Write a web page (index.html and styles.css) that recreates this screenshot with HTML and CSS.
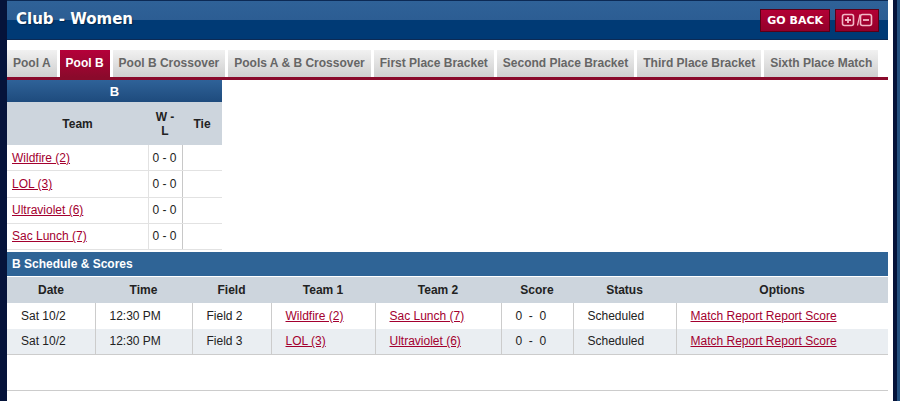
FILE: index.html
```html
<!DOCTYPE html>
<html lang="en">
  <head>
    <meta charset="UTF-8" />
    <meta name="viewport" content="width=device-width, initial-scale=1.0" />
    <title>Club - Women</title>
    <link rel="stylesheet" href="styles.css">
  </head>
  <body>
    <div class="page">
      <div class="header">
        <h1>Club - Women</h1>
        <div class="actions">
          <a class="btn" href="#">GO BACK</a>
          <a class="btn toggle" href="#">
            <svg width="32" height="14" viewBox="0 0 32 14">
              <rect x="1.5" y="1.5" width="11" height="11" rx="2" fill="none" stroke="#f2b8c6" stroke-width="1.6" />
              <path d="M4 7h6M7 4v6" stroke="#f2b8c6" stroke-width="1.8" />
              <path d="M16.5 12.5l2.5-11" stroke="#f2b8c6" stroke-width="1.2" />
              <rect x="19.5" y="1.5" width="11" height="11" rx="2" fill="none" stroke="#f2b8c6" stroke-width="1.6" />
              <path d="M22 7h6" stroke="#f2b8c6" stroke-width="1.8" />
            </svg>
          </a>
        </div>
      </div>

      <ul class="tabs">
        <li><a href="#">Pool A</a></li>
        <li class="active"><a href="#">Pool B</a></li>
        <li><a href="#">Pool B Crossover</a></li>
        <li><a href="#">Pools A &amp; B Crossover</a></li>
        <li><a href="#">First Place Bracket</a></li>
        <li><a href="#">Second Place Bracket</a></li>
        <li><a href="#">Third Place Bracket</a></li>
        <li><a href="#">Sixth Place Match</a></li>
      </ul>

      <table class="pool">
        <tr><th colspan="3" class="caption">B</th></tr>
        <tr class="heads">
          <th class="c-team">Team</th>
          <th class="c-wl">W - L</th>
          <th class="c-tie">Tie</th>
        </tr>
        <tr><td><a href="#">Wildfire (2)</a></td><td>0 - 0</td><td></td></tr>
        <tr><td><a href="#">LOL (3)</a></td><td>0 - 0</td><td></td></tr>
        <tr><td><a href="#">Ultraviolet (6)</a></td><td>0 - 0</td><td></td></tr>
        <tr><td><a href="#">Sac Lunch (7)</a></td><td>0 - 0</td><td></td></tr>
      </table>

      <div class="bar">B Schedule &amp; Scores</div>
      <table class="schedule">
        <tr class="heads">
          <th class="s-date">Date</th>
          <th class="s-time">Time</th>
          <th class="s-field">Field</th>
          <th class="s-t1">Team 1</th>
          <th class="s-t2">Team 2</th>
          <th class="s-score">Score</th>
          <th class="s-status">Status</th>
          <th>Options</th>
        </tr>
        <tr>
          <td>Sat 10/2</td>
          <td>12:30 PM</td>
          <td>Field 2</td>
          <td><a href="#">Wildfire (2)</a></td>
          <td><a href="#">Sac Lunch (7)</a></td>
          <td>0&nbsp; - &nbsp;0</td>
          <td>Scheduled</td>
          <td><a href="#">Match Report Report Score</a></td>
        </tr>
        <tr class="alt">
          <td>Sat 10/2</td>
          <td>12:30 PM</td>
          <td>Field 3</td>
          <td><a href="#">LOL (3)</a></td>
          <td><a href="#">Ultraviolet (6)</a></td>
          <td>0&nbsp; - &nbsp;0</td>
          <td>Scheduled</td>
          <td><a href="#">Match Report Report Score</a></td>
        </tr>
      </table>

      <div class="footer-line"></div>
    </div>
  </body>
</html>
```

FILE: styles.css
```css
body {
  margin: 0;
  padding: 0;
  height: 401px;
  overflow: hidden;
  background: linear-gradient(to right, #05133a 0, #05133a 897px, #24507f 897px);
  font-family: "Liberation Sans", Arial, sans-serif;
  font-size: 12px;
  color: #222;
}
.page {
  margin-left: 7px;
  width: 881px;
  padding-right: 5px;
  height: 401px;
  background-color: white;
}
a {
  color: #a3002f;
}

/* title bar */
.header {
  height: 38px;
  border-top: 1px solid #0c2a55;
  border-bottom: 1px solid #0c2a55;
  background: linear-gradient(#2f6298 0, #2c5d93 19px, #003a75 19px, #003a75 100%);
  display: flex;
  justify-content: space-between;
  align-items: center;
  padding-left: 9px;
  padding-right: 9px;
}
.header h1 {
  margin: 0 0 2px 0;
  color: white;
  font-family: "DejaVu Sans", Verdana, sans-serif;
  font-size: 15px;
  font-weight: bold;
  text-shadow: 1px 1px 1px rgba(0, 0, 0, 0.35);
}
.actions {
  display: flex;
  gap: 5px;
}
.btn {
  height: 21px;
  padding: 0 6px;
  display: flex;
  align-items: center;
  border: 1px solid #5a0016;
  background: linear-gradient(#b30035, #93002a);
  color: white;
  font-family: "DejaVu Sans", Verdana, sans-serif;
  font-size: 11px;
  font-weight: bold;
  text-decoration: none;
}
.toggle {
  padding: 0 5px;
}

/* tabs */
.tabs {
  list-style: none;
  margin: 10px 0 0 0;
  padding: 0;
  display: flex;
  gap: 3px;
  border-bottom: 3px solid #8a0a2b;
}
.tabs li {
  flex: none;
}
.tabs li a {
  display: block;
  height: 27px;
  line-height: 27px;
  padding: 0 6px;
  white-space: nowrap;
  background: linear-gradient(#f1f1f1, #cfcfcf);
  color: #666;
  font-weight: bold;
  text-decoration: none;
}
.tabs li.active a {
  background: linear-gradient(#b5003a, #8a0a2b);
  color: white;
}

/* pool standings */
table {
  border-collapse: collapse;
}
.pool {
  width: 215px;
}
.pool .caption {
  height: 22px;
  padding: 0;
  background: linear-gradient(#2f6298, #1e4b7d);
  color: white;
  font-size: 13px;
}
.heads th {
  background-color: #cdd5dd;
  font-weight: bold;
}
.pool .heads th {
  height: 43px;
  padding: 0 4px;
}
.c-team {
  width: 133px;
}
.c-wl {
  width: 26px;
}
.pool td {
  height: 25.25px;
  padding: 0 4px 0 5px;
  border: 1px solid #e2e2e2;
  border-top: 0;
}
.pool td:first-child {
  border-left: 0;
}
.pool td:nth-child(2) {
  padding-left: 4px;
  border-left: 1px solid #c8c8c8;
  border-right: 1px solid #c8c8c8;
}
.pool td:last-child {
  border-right: 0;
}

/* schedule */
.bar {
  height: 24px;
  line-height: 24px;
  margin-top: 2px;
  padding-left: 5px;
  background-color: #2f6496;
  color: white;
  font-weight: bold;
}
.schedule {
  width: 881px;
  border-top: 1px solid white;
  border-bottom: 1px solid #cccccc;
}
.schedule .heads th {
  height: 26px;
  padding: 0;
}
.s-date { width: 88px; }
.s-time { width: 97px; }
.s-field { width: 79px; }
.s-t1 { width: 104px; }
.s-t2 { width: 126px; }
.s-score { width: 72px; }
.s-status { width: 103px; }
.schedule td {
  height: 25.5px;
  padding: 0 0 0 14px;
  border-left: 1px solid #cccccc;
}
.schedule td:first-child {
  border-left: 0;
}
.schedule tr.alt td {
  background-color: #eaeef2;
}
.footer-line {
  margin-top: 35px;
  border-top: 1px solid #cccccc;
}
```
